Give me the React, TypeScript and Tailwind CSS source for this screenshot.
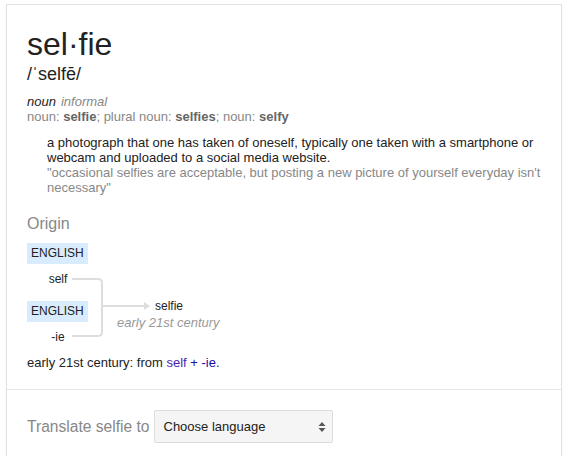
import React from 'react';

const FONT = "font-['Liberation_Sans',Arial,sans-serif]";

/** Small blue-ish language badge */
function LangBadge({ label }: { label: string }) {
  return (
    <div className="inline-block bg-[#d9ecfd] px-[4px] h-[21px] leading-[21px] text-[12px] text-[#222]">
      {label}
    </div>
  );
}

/** Connector lines of the origin diagram */
function OriginLines() {
  return (
    <svg className="absolute left-0 top-0" width="140" height="100" viewBox="0 0 140 100" fill="none">
      <path
        d="M45 36 H71 Q75 36 75 40 V89 Q75 93 71 93 H45"
        stroke="#dddddd"
        strokeWidth="2"
      />
      <path d="M75 63 H118" stroke="#dddddd" strokeWidth="2" />
      <path d="M117 59 L123 63 L117 67 Z" fill="#dddddd" />
    </svg>
  );
}

export default function App() {
  return (
    <div className={`${FONT} bg-white w-[570px] h-[456px] overflow-hidden pt-[4px] pl-[6px] pr-[8px]`}>
      <div className="border border-[#e3e3e3] shadow-[0_1px_2px_rgba(0,0,0,0.06)] bg-white h-[470px]">
        {/* Headword block */}
        <div className="px-[20px] pt-[21px] pb-[19px]">
          <div className="text-[32px] leading-[37px] text-[#222]">sel·fie</div>
          <div className="text-[18px] leading-[20px] text-[#222] mt-[1px]">/ˈselfē/</div>

          <div className="mt-[10px] text-[13px] leading-[15px]">
            <span className="italic text-[#222]">noun</span>
            <span className="italic text-[#878787] ml-[5px]">informal</span>
          </div>
          <div className="text-[13px] leading-[15px] text-[#878787]">
            noun: <b className="text-[#666]">selfie</b>; plural noun: <b className="text-[#666]">selfies</b>; noun:{' '}
            <b className="text-[#666]">selfy</b>
          </div>

          <div className="pl-[20px] mt-[11px] text-[13px] leading-[15px]">
            <div className="text-[#222]">
              a photograph that one has taken of oneself, typically one taken with a smartphone or webcam and uploaded
              to a social media website.
            </div>
            <div className="text-[#878787]">
              "occasional selfies are acceptable, but posting a new picture of yourself everyday isn't necessary"
            </div>
          </div>

          {/* Origin */}
          <div className="mt-[19px] text-[16px] leading-[20px] text-[#878787]">Origin</div>

          <div className="relative mt-[9px] w-[220px] h-[102px]">
            <OriginLines />
            <div className="flex flex-col items-start text-[12px] text-[#222]">
              <LangBadge label="ENGLISH" />
              <div className="w-[62px] text-center leading-[16px] mt-[7px]">self</div>
              <div className="mt-[14px]">
                <LangBadge label="ENGLISH" />
              </div>
              <div className="w-[62px] text-center leading-[16px] mt-[7px]">-ie</div>
            </div>
            <div className="absolute left-[128px] top-[55px] text-[12px] leading-[16px] text-[#222]">selfie</div>
            <div className="absolute left-[90px] top-[72px] text-[13px] leading-[16px] italic text-[#999]">
              early 21st century
            </div>
          </div>

          <div className="mt-[10px] text-[13px] leading-[15px] text-[#222]">
            early 21st century: from <span className="text-[#4b1fb0]">self</span>{' '}
            <span className="text-[#1a0dab]">+ -ie</span>.
          </div>
        </div>

        {/* Translate */}
        <div className="border-t border-[#e5e5e5] px-[20px] pt-[20px] flex items-center">
          <span className="text-[15.6px] text-[#878787] mr-[4px]">Translate selfie to</span>
          <div className="w-[179px] h-[33px] rounded-[2px] border border-[#dcdcdc] bg-[#f5f5f5] flex items-center justify-between pl-[9px] pr-[6px]">
            <span className="text-[13px] text-[#222]">Choose language</span>
            <svg width="8" height="12" viewBox="0 0 8 12">
              <path d="M4 1 L7.5 5 H0.5 Z" fill="#555" />
              <path d="M4 11 L7.5 7 H0.5 Z" fill="#555" />
            </svg>
          </div>
        </div>
      </div>
    </div>
  );
}
